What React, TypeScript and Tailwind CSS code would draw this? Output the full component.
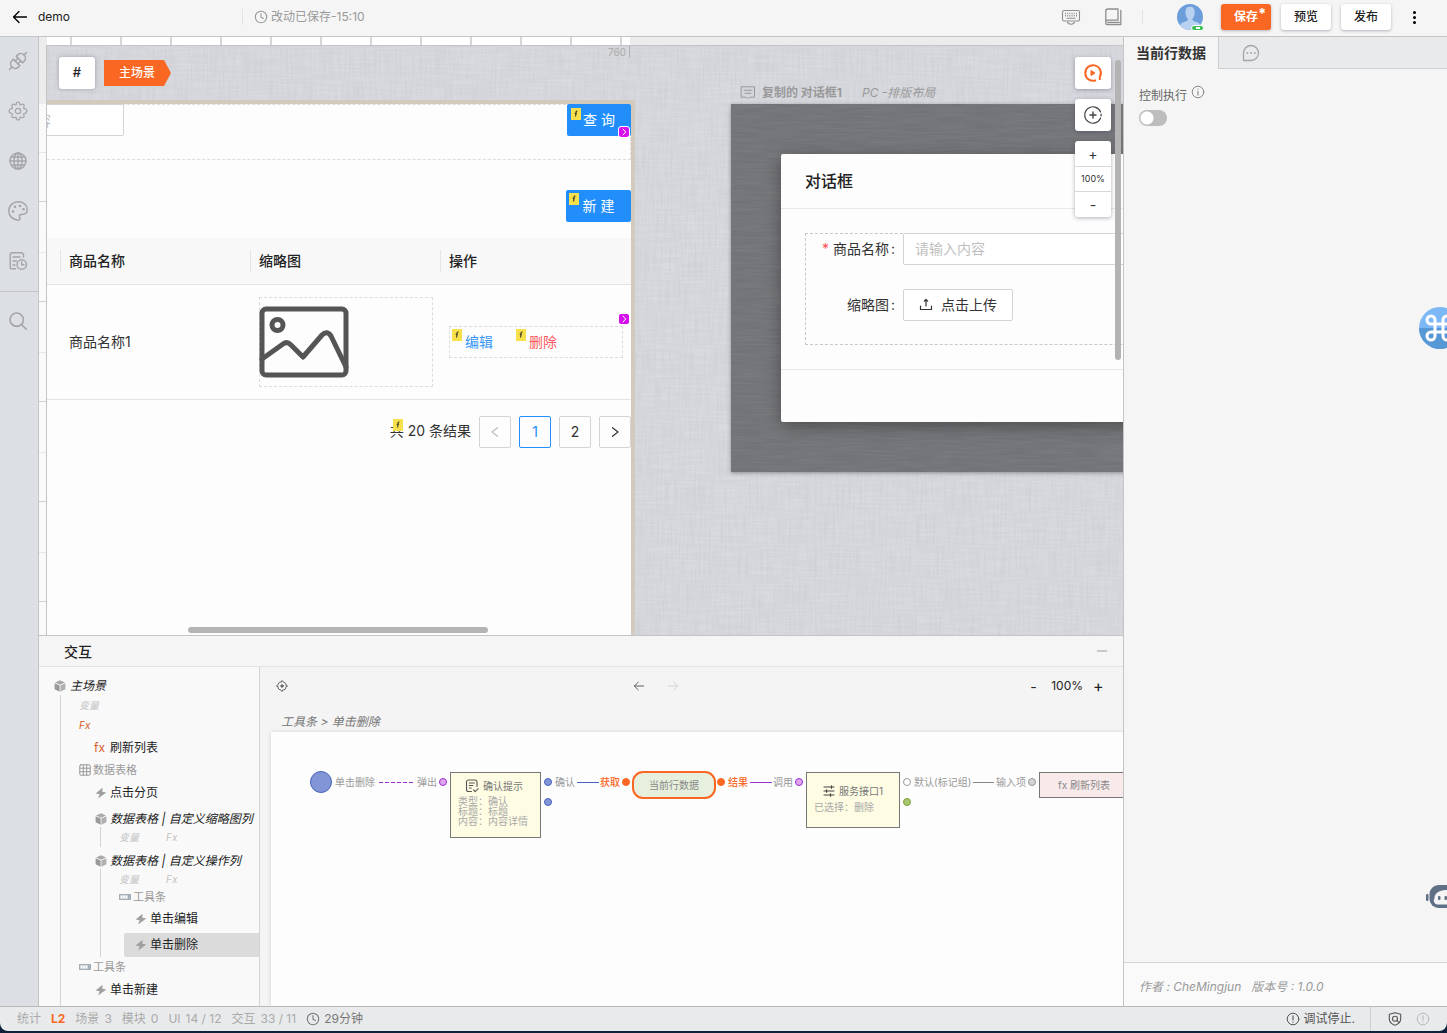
import React from 'react';

type IconProps = { className?: string };

const stroke = {
  fill: 'none',
  stroke: 'currentColor',
  strokeLinecap: 'round' as const,
  strokeLinejoin: 'round' as const,
};

const ArrowLeft = ({ className }: IconProps) => (
  <svg viewBox="0 0 16 14" className={className} {...stroke} strokeWidth="1.3">
    <path d="M7 1.5 1.5 7 7 12.5M1.5 7h13" />
  </svg>
);

const Clock = ({ className }: IconProps) => (
  <svg viewBox="0 0 14 14" className={className} {...stroke} strokeWidth="1.1">
    <circle cx="7" cy="7" r="5.7" />
    <path d="M7 3.6V7.3l2.4 1.2" />
  </svg>
);

const Plug = ({ className }: IconProps) => (
  <svg viewBox="0 0 20 20" className={className} {...stroke} strokeWidth="1.5">
    <g transform="rotate(-45 10 10)">
      <path d="M-2 10h3.500M18.500 10H22" />
      <path d="M8 5.500H5.500a4 4.500 0 0 0 0 9H8z" />
      <path d="M12 5.500h2.500a4 4.500 0 0 1 0 9H12z" />
      <path d="M8 8h4M8 12h4" />
    </g>
  </svg>
);

const Gear = ({ className }: IconProps) => (
  <svg viewBox="0 0 20 20" className={className} {...stroke} strokeWidth="1.2">
    <path d="M8.300 3.200a1.750 1.750 0 1 1 3.400 0q.2 1 1.200.5 1.200-.9 2.900-.1.800 1.700-.1 2.900-.5 1 .5 1.200a1.750 1.750 0 1 1 .6 4.600q-1.600.1-1.100 1.200.9 1.200.1 2.800-1.700.8-2.900-.1-1-.5-1.200.6a1.750 1.750 0 1 1-3.400 0q-.2-1.100-1.200-.6-1.200.9-2.900.1-.8-1.600.1-2.800.5-1.100-1.100-1.200a1.750 1.750 0 1 1 .6-4.600q1-.2.500-1.200-.9-1.200-.1-2.900 1.700-.8 2.900.1 1 .5 1.200-.5Z" />
    <circle cx="10" cy="10" r="2.700" />
  </svg>
);

const Globe = ({ className }: IconProps) => (
  <svg viewBox="0 0 20 20" className={className} {...stroke} strokeWidth="1.4">
    <circle cx="10" cy="10" r="8" />
    <ellipse cx="10" cy="10" rx="4" ry="8" />
    <path d="M10 2v16M2 10h16M3.500 6h13M3.500 14h13" />
  </svg>
);

const Palette = ({ className }: IconProps) => (
  <svg viewBox="0 0 20 20" className={className} {...stroke} strokeWidth="1.5">
    <path d="M10.500 19.200C4.500 19 .8 15 .8 10 .8 4.500 5 .8 10.200.8c5.200 0 9 3.300 9 7.700 0 2.900-1.700 4.700-4.200 4.700-2.600 0-4.200.6-3.500 2.500.8 1.900.6 3.500-1 3.500Z" />
    <g fill="currentColor" stroke="none">
      <circle cx="5" cy="10.500" r="1.300" />
      <circle cx="7" cy="5.700" r="1.300" />
      <circle cx="12" cy="5" r="1.300" />
      <circle cx="15.500" cy="8.300" r="1.300" />
    </g>
  </svg>
);

const LogDoc = ({ className }: IconProps) => (
  <svg viewBox="0 0 20 20" className={className} {...stroke} strokeWidth="1.4">
    <path d="M15.500 6V3.200L14 1.700H4.500C3 1.700 2.200 2.300 2.200 3.700V16c0 1.200.7 1.800 1.800 1.800h3.500M5 6h7M5 10h3.500M5 14h2" />
    <circle cx="13.700" cy="13.500" r="4.700" />
    <path d="M13.700 11v2.800h2.300" />
  </svg>
);

const Search = ({ className }: IconProps) => (
  <svg viewBox="0 0 20 20" className={className} {...stroke} strokeWidth="1.6">
    <circle cx="8.700" cy="8.700" r="6.700" />
    <path d="m13.700 13.700 4.600 4.600" />
  </svg>
);

const Keyboard = ({ className }: IconProps) => (
  <svg viewBox="0 0 20 18" className={className} {...stroke} strokeWidth="1.100">
    <rect x="1.500" y="2.500" width="17" height="10.500" rx="1.500" />
    <path d="M4 5.500h12M4 7.700h12" strokeDasharray="1 1.200" strokeLinecap="butt" strokeWidth="1.400" />
    <path d="M6 10.300h8M6.500 14.500q3.500 3.500 7 0" />
  </svg>
);

const Book = ({ className }: IconProps) => (
  <svg viewBox="0 0 18 18" className={className} {...stroke} strokeWidth="1.300">
    <path d="M14 1H4a2.200 2.200 0 0 0-2.200 2.200v11.500M14 1v11.200H3.800c-2.700 0-2.700 4.500 0 4.500h13V2.500M3.800 14.500h11.500" />
  </svg>
);

const Comment = ({ className }: IconProps) => (
  <svg viewBox="0 0 16 14" className={className} {...stroke} strokeWidth="1">
    <path d="M1.500.8h13v10.400H9.500L8 12.700l-1.500-1.500h-5ZM4 4.300h8M5 7.300h6" />
  </svg>
);

const Chat = ({ className }: IconProps) => (
  <svg viewBox="0 0 18 18" className={className} {...stroke} strokeWidth="1.300">
    <path d="M1.500 16.500V9A7.500 7.500 0 1 1 9 16.500Z" />
    <path d="M5.300 9h.1M9 9h.1M12.700 9h.1" strokeWidth="1.800" />
  </svg>
);

const Info = ({ className, flip = false }: IconProps & { flip?: boolean }) => (
  <svg viewBox="0 0 14 14" className={className} {...stroke} strokeWidth="1">
    <circle cx="7" cy="7" r="5.800" />
    <path d={flip ? 'M7 3.800V8M7 10v.2' : 'M7 6.300v3.800M7 4v.2'} strokeWidth="1.100" />
  </svg>
);

const ShieldSearch = ({ className }: IconProps) => (
  <svg viewBox="0 0 16 16" className={className} {...stroke} strokeWidth="1.100">
    <path d="M8 1.700 13.700 3.200v4.600c0 3.200-2.300 5.300-5.700 6.500-3.400-1.200-5.700-3.300-5.700-6.500V3.200Z" />
    <circle cx="8" cy="7.700" r="2.500" />
    <path d="m9.900 9.600 1.600 1.600" />
  </svg>
);

const Cube = ({ className }: IconProps) => (
  <svg viewBox="0 0 12 12" className={className}>
    <path d="M6 .3 11 2.500 6 4.800 1 2.500Z" fill="#a9a9a9" />
    <path d="M.6 3.300 5.600 5.600V11.800L.6 9.300Z" fill="#999" />
    <path d="M11.400 3.300 6.400 5.600V11.800L11.400 9.300Z" fill="#b0b0b0" />
  </svg>
);

const Bolt = ({ className }: IconProps) => (
  <svg viewBox="0 0 12 12" className={className} fill="#a0a0a0">
    <path d="M7.500.7.700 6.600l3.900.7-1.500 4.200 8.200-6-3.900-.8Z" />
  </svg>
);

const ToolbarIcon = ({ className }: IconProps) => (
  <svg viewBox="0 0 12 6" className={className}>
    <rect x=".7" y=".7" width="10.600" height="4.600" fill="#fff" stroke="#a5b0b8" strokeWidth="1.400" />
    <path d="M3.700 1v4M6.200 1v4" stroke="#c3cbd0" strokeWidth=".8" />
    <path d="M8.500 1h2.500v4H8.500z" fill="#a5b0b8" />
  </svg>
);

const GridIcon = ({ className }: IconProps) => (
  <svg viewBox="0 0 12 12" className={className} {...stroke} strokeWidth="1">
    <rect x=".8" y=".8" width="10.400" height="10.400" rx="1" />
    <path d="M1 4.200h10M1 7.700h10M4.300 1v10M7.700 1v10" />
  </svg>
);

const Target = ({ className }: IconProps) => (
  <svg viewBox="0 0 12 12" className={className} {...stroke} strokeWidth="1">
    <circle cx="6" cy="6" r="4.500" strokeDasharray="5.600 1.470" strokeDashoffset="-.7" />
    <path d="M6 .5v1.300M6 10.200v1.300M.5 6h1.300M10.200 6h1.300" />
    <circle cx="6" cy="6" r="1.200" fill="currentColor" />
  </svg>
);

const Upload = ({ className }: IconProps) => (
  <svg viewBox="0 0 14 14" className={className} {...stroke} strokeWidth="1.200">
    <path d="M1.500 9v3.500h11V9M7 9V2.500M5.300 4.200 7 2.500l1.700 1.700" />
  </svg>
);

const Picture = ({ className }: IconProps) => (
  <svg viewBox="0 0 90 72" className={className} {...stroke} stroke="#555" strokeWidth="5">
    <rect x="3" y="3" width="84" height="66" rx="4" />
    <circle cx="18.500" cy="19" r="5.500" />
    <path d="M3 53 24 38q4-3 8 1l12 12L63 29q5-5 9 1l15 31" />
  </svg>
);

const FBadge = ({ className }: IconProps) => (
  <svg viewBox="0 0 10 12" className={`absolute h-3 w-[10px] ${className}`} {...stroke} stroke="#4a4526" strokeWidth="1.200">
    <path d="M0 0h10v12H0z" fill="#f6e04c" stroke="none" />
    <path d="M6.500 3.300q-1.300-.4-1.500 1L4.600 8.500M3.700 5.300h2.200" strokeLinecap="butt" />
  </svg>
);

const Marker = ({ className }: IconProps) => (
  <span className={`absolute flex size-[10px] items-center justify-center rounded-[2px] bg-[#d70fee] ${className}`}>
    <svg viewBox="0 0 8 8" className="size-2" {...stroke} stroke="#fff" strokeWidth="1">
      <path d="M3 1 5.700 4 3 7" />
    </svg>
  </span>
);

/* Woven cloth texture laid over the free canvas and the dialog backdrop. */
const Linen = ({ id, className }: { id: string; className: string }) => (
  <svg aria-hidden="true" className={`pointer-events-none absolute inset-0 size-full ${className}`}>
    <filter id={`${id}-h`} x="0" y="0" width="100%" height="100%">
      <feTurbulence type="fractalNoise" baseFrequency="0.03 0.5" numOctaves="2" seed="3" />
      <feColorMatrix values="0 0 0 0 1  0 0 0 0 1  0 0 0 0 1  1.2 0 0 0 -0.4" />
    </filter>
    <filter id={`${id}-v`} x="0" y="0" width="100%" height="100%">
      <feTurbulence type="fractalNoise" baseFrequency="0.5 0.03" numOctaves="2" seed="8" />
      <feColorMatrix values="0 0 0 0 0.3  0 0 0 0 0.32  0 0 0 0 0.38  0.8 0 0 0 -0.3" />
    </filter>
    <rect width="100%" height="100%" filter={`url(#${id}-h)`} />
    <rect width="100%" height="100%" filter={`url(#${id}-v)`} />
  </svg>
);

function Header() {
  return (
    <header className="flex h-[37px] shrink-0 items-center border-b border-[#c4c4c4] bg-[#f5f5f5] pb-[2px]">
      <div className="flex w-[242px] items-center">
        <button aria-label="返回" className="ml-3">
          <ArrowLeft className="h-[14px] w-4" />
        </button>
        <span className="ml-[10px] text-[12px] text-[#222]">demo</span>
      </div>
      <div className="flex flex-1 items-center border-l border-[#e3e3e3] pl-[11px] text-[12px] leading-4 text-[#999]">
        <Clock className="mr-[3px] size-[14px]" />
        改动已保存-15:10
      </div>
      <div className="flex items-center text-[#8e8e8e]">
        <button aria-label="快捷键">
          <Keyboard className="h-[18px] w-5" />
        </button>
        <button aria-label="文档" className="ml-[23px]">
          <Book className="size-[18px]" />
        </button>
        <span className="ml-5 h-[14px] w-px bg-[#e3e3e3]" />
        <span className="relative ml-[34px]">
          <svg viewBox="0 0 26 26" className="size-[26px]">
            <defs>
              <clipPath id="avatar">
                <circle cx="13" cy="13" r="13" />
              </clipPath>
            </defs>
            <g clipPath="url(#avatar)">
              <path d="M0 0h26v26H0z" fill="#6c9edb" />
              <path d="M8.500 8.500C8.500 4 10 2.800 13 2.800s4.700 1.700 4.700 5.700c0 3-1 5-2.400 6.300 0 2 1 2.400 4 3.200 2.700.7 4 2 4 4V26H3v-4c0-2 1.300-3.300 4-4 3-.8 4-1.200 4-3.200C9.500 13.500 8.500 11.500 8.500 8.500Z" fill="#b9d1f0" />
            </g>
          </svg>
          <span className="absolute -right-px -bottom-px flex h-[6px] w-[13px] items-center justify-center rounded-full border border-white bg-[#3dbd55]">
            <span className="h-[2px] w-1 bg-white" />
          </span>
        </span>
        <button className="relative ml-[18px] h-[26px] w-[50px] rounded-[3px] bg-[#fa6723] text-[12px] font-bold text-white shadow-[0_1px_3px_rgba(60,60,90,0.35)]">
          保存
          <span className="absolute top-[2px] right-[5px] text-[14px] leading-4">*</span>
        </button>
        <button className="ml-[10px] h-[26px] w-[50px] rounded-[3px] bg-white text-[12px] font-medium text-[#222] shadow-[0_1px_3px_rgba(60,60,90,0.35)]">
          预览
        </button>
        <button className="ml-[10px] h-[26px] w-[50px] rounded-[3px] bg-white text-[12px] font-medium text-[#222] shadow-[0_1px_3px_rgba(60,60,90,0.35)]">
          发布
        </button>
        <button aria-label="更多" className="mr-[31px] ml-[21px] flex w-1 flex-col items-center gap-[2px]">
          <span className="size-[3px] rounded-full bg-black" />
          <span className="size-[3px] rounded-full bg-black" />
          <span className="size-[3px] rounded-full bg-black" />
        </button>
      </div>
    </header>
  );
}

function SideNav() {
  const items = [
    ['连接器', Plug],
    ['设置', Gear],
    ['国际化', Globe],
    ['主题', Palette],
    ['日志', LogDoc],
  ] as const;
  return (
    <nav className="w-[39px] shrink-0 border-r border-[#c4c4c4] bg-[#dcdfe4] text-[#a3a5a9]">
      {items.map(([label, Icon]) => (
        <button key={label} aria-label={label} className="flex h-[50px] w-full items-center justify-center pr-[2px] pb-[2px]">
          <Icon className="size-5" />
        </button>
      ))}
      <button aria-label="搜索" className="mt-1 flex h-[58px] w-full items-center justify-center border-t border-[#c4c4c4] pr-[2px]">
        <Search className="size-5" />
      </button>
    </nav>
  );
}

function PageScene() {
  const th = 'p-0 pl-2 text-left font-medium';
  return (
    <section className="relative mt-[54px] w-[588px] shrink-0 overflow-hidden border-t-4 border-r-4 border-[#d3c9bc] bg-[#fdfdfd] text-[14px] text-[#333]">
      <div className="flex h-14 items-start justify-between border-y border-r border-dashed border-[#dcdcdc]">
        <input
          aria-label="查询内容"
          placeholder="请输入内容"
          className="-mt-px -ml-[79px] h-8 w-[156px] rounded-[2px] border border-[#d4d4d4] bg-white px-3 placeholder:text-[#bfbfbf]"
        />
        <button className="relative -mt-px -mr-px h-8 w-16 rounded-[2px] bg-[#228efc] pb-[2px] text-white">
          查 询
          <FBadge className="top-1 left-1" />
          <Marker className="right-[2px] -bottom-px outline outline-white" />
        </button>
      </div>
      <div className="mt-[30px] mb-4 flex justify-end">
        <button className="relative h-8 w-[65px] rounded-[2px] bg-[#228efc] pb-[2px] text-white">
          新 建
          <FBadge className="top-[3px] left-[3px]" />
        </button>
      </div>
      <table className="w-full table-fixed border-collapse">
        <thead>
          <tr className="h-[46px] border-b border-[#e4e4e4] bg-[#f8f8f8] text-[#222]">
            <th className="w-[14px] p-0">
              <span className="ml-auto block h-[22px] w-px bg-[#e4e4e4]" />
            </th>
            <th className={th}>
              <span className="flex h-[22px] items-center border-r border-[#e4e4e4]">商品名称</span>
            </th>
            <th className={th}>
              <span className="flex h-[22px] items-center border-r border-[#e4e4e4]">缩略图</span>
            </th>
            <th className={th}>操作</th>
          </tr>
        </thead>
        <tbody>
          <tr className="h-[115px] border-b border-[#e4e4e4]">
            <td className="p-0" />
            <td className="p-0 pl-2">商品名称1</td>
            <td className="p-0 px-2">
              <div className="flex h-[90px] items-center border border-dashed border-[#dcdcdc]">
                <Picture className="-ml-px h-[72px] w-[90px]" />
              </div>
            </td>
            <td className="relative p-0 px-2">
              <div className="flex h-8 items-center gap-9 border border-dashed border-[#dcdcdc] pl-[15px]">
                <button className="relative text-[#3797f5]">
                  编辑
                  <FBadge className="-top-[2px] -left-[13px]" />
                </button>
                <button className="relative text-[#fb5a5e]">
                  删除
                  <FBadge className="-top-[2px] -left-[13px]" />
                </button>
              </div>
              <Marker className="top-[29px] right-[2px]" />
            </td>
          </tr>
        </tbody>
      </table>
      <div className="mt-4 flex items-center justify-end gap-2">
        <span className="relative pb-[2px]">
          共 20 条结果
          <FBadge className="-top-px left-[3px]" />
        </span>
        <button aria-label="上一页" className="flex size-8 items-center justify-center rounded-[2px] border border-[#d4d4d4] text-[#bbb]">
          <svg viewBox="0 0 12 12" className="size-3" {...stroke} strokeWidth="1.100">
            <path d="M8.500 1.700 3 6l5.500 4.300" />
          </svg>
        </button>
        <button className="size-8 rounded-[2px] border border-[#228efc] text-[#228efc]">1</button>
        <button className="size-8 rounded-[2px] border border-[#d4d4d4]">2</button>
        <button aria-label="下一页" className="flex size-8 items-center justify-center rounded-[2px] border border-[#d4d4d4]">
          <svg viewBox="0 0 12 12" className="size-3" {...stroke} strokeWidth="1.200">
            <path d="M3.500 1.700 9 6l-5.500 4.300" />
          </svg>
        </button>
      </div>
    </section>
  );
}

function DialogScene() {
  return (
    <section className="relative mt-[36px] ml-24 w-[620px] shrink-0">
      <div className="flex h-[22px] items-center pl-[9px] text-[12px] text-[#999]">
        <Comment className="mr-[6px] h-[14px] w-4" />
        <h3 className="font-bold">复制的 对话框1</h3>
        <em className="ml-5">PC -排版布局</em>
      </div>
      <div className="relative h-[368px] bg-[#727376] p-[50px] shadow-[0_1px_4px_rgba(0,0,0,0.35)]">
        <Linen id="backdrop" className="opacity-10" />
        <div className="relative rounded-[2px] bg-[#fdfdfd] text-[14px] text-[#333] shadow-[0_4px_16px_rgba(0,0,0,0.35)]">
          <h2 className="h-[55px] border-b border-[#e8e8e8] pl-6 text-[16px] leading-[54px] font-medium text-[#222]">对话框</h2>
          <div className="p-6">
            <div className="flex flex-col gap-6 border border-dashed border-[#c8c8c8] pb-[23px]">
              <div className="-mt-px flex h-8 items-center">
                <label htmlFor="goods-name" className="flex w-[97px] shrink-0 justify-end gap-[2px] pr-2 pb-[2px]">
                  <span className="mr-[2px] text-[#ff4d4f]">*</span>
                  <span>商品名称</span>
                  <span>:</span>
                </label>
                <input
                  id="goods-name"
                  placeholder="请输入内容"
                  className="h-8 min-w-0 flex-1 rounded-[2px] border border-[#d4d4d4] bg-white px-[11px] pb-[2px] placeholder:text-[#bfbfbf]"
                />
              </div>
              <div className="flex h-8 items-center">
                <span className="flex w-[97px] shrink-0 justify-end gap-[2px] pr-2 pb-[2px]">
                  <span>缩略图</span>
                  <span>:</span>
                </span>
                <button className="flex h-8 w-[110px] items-center justify-center gap-2 rounded-[2px] border border-[#d4d4d4] bg-white pb-[2px]">
                  <Upload className="size-[14px]" />
                  点击上传
                </button>
              </div>
            </div>
          </div>
          <div className="h-[53px] border-t border-[#e8e8e8]" />
        </div>
      </div>
    </section>
  );
}

function Canvas() {
  const float = 'w-9 rounded-[3px] bg-white shadow-[0_1px_4px_rgba(60,60,90,0.4)]';
  return (
    <main className="flex min-h-0 flex-1 flex-col bg-[#ececec]">
      <div className="ml-2 h-2 w-[583px] shrink-0 bg-white [background-image:linear-gradient(90deg,#d6d6d6_2px,transparent_2px)] [background-size:50px_100%] [background-position:23px_0]" />
      <div className="flex min-h-0 flex-1">
        <div className="w-[7px] shrink-0 pt-[59px]">
          <div className="h-full bg-[#fafafa] [background-image:linear-gradient(#d0d0d0_1px,transparent_1px),linear-gradient(#e6e6e6_1px,transparent_1px)] [background-size:100%_100px] [background-position:0_97px,0_48px]" />
        </div>
        <div className="relative flex min-w-0 flex-1 overflow-hidden border-t border-l border-[#c4c4c4] bg-[#d4d6db]">
          <Linen id="cloth" className="opacity-25" />
          <PageScene />
          <DialogScene />
          <span className="absolute top-0 left-[561px] h-3 w-[22px] border-r border-[#b0b0b0] text-[10px] leading-[13px] text-[#aaa]">760</span>
          <div className="absolute top-[11px] left-3 flex items-center gap-[9px]">
            <button className="h-8 w-9 rounded-[3px] bg-white text-[13px] font-medium text-[#222] shadow-[0_0_4px_rgba(60,60,90,0.35)]">#</button>
            <button className="h-[26px] w-[67px] bg-[#fa6723] pr-px text-[12px] font-medium text-white [clip-path:polygon(0_0,60px_0,100%_50%,60px_100%,0_100%)]">
              主场景
            </button>
          </div>
          <div className="absolute top-[11px] right-3 flex flex-col gap-[10px]">
            <button aria-label="运行" className={`flex h-8 items-center justify-center text-[#fa6723] ${float}`}>
              <svg viewBox="0 0 20 20" className="size-5" {...stroke} strokeLinecap="butt" strokeWidth="2">
                <path d="M13 17.200A7.800 7.800 0 1 1 16.800 13.900M16.800 13v4" />
                <path d="M8 7.500v5l4-2.500Z" fill="currentColor" strokeWidth="1" />
              </svg>
            </button>
            <button aria-label="添加" className={`flex h-8 items-center justify-center text-[#444] ${float}`}>
              <svg viewBox="0 0 20 20" className="size-5" {...stroke} strokeWidth="1.200">
                <path d="M17.600 7A8.200 8.200 0 1 0 17.600 13M18.100 9v2" />
                <path d="M10 7v6M7 10h6" strokeWidth="1.400" />
              </svg>
            </button>
            <div className={`flex flex-col divide-y divide-[#d8d8d8] text-center text-[#333] ${float}`}>
              <button className="h-[26px] text-[14px] leading-[26px]">+</button>
              <span className="h-[25px] text-[9px] leading-6">100%</span>
              <button className="h-[25px] text-[14px] leading-[26px]">-</button>
            </div>
          </div>
          <span className="absolute top-[14px] right-[2px] h-[300px] w-[6px] rounded-full bg-[#b3b3b3]" />
          <span className="absolute bottom-[2px] left-[141px] h-[6px] w-[300px] rounded-full bg-[#b4b4b4]" />
        </div>
      </div>
    </main>
  );
}

function EventRow({ label, className }: { label: string; className: string }) {
  return (
    <button className={`flex items-center gap-[3px] text-[#222] ${className}`}>
      <Bolt className="size-3" />
      {label}
    </button>
  );
}

function SceneVars() {
  return (
    <div className="flex h-[14px] items-center gap-[27px] pb-px pl-[18px] text-[10px] text-[#c4c4c4] italic">
      <span>变量</span>
      <span>Fx</span>
    </div>
  );
}

function Tree() {
  return (
    <aside className="w-[221px] shrink-0 overflow-hidden border-r border-[#d4d4d4] bg-[#f9f9f9] pt-[10px] text-[12px] whitespace-nowrap text-[#222]">
      <div className="flex h-[18px] items-center gap-1 pl-[15px] italic">
        <Cube className="size-3" />
        主场景
      </div>
      <div className="ml-[21px] border-l border-[#d4d4d4]">
        <div className="flex h-5 items-center pl-[18px] text-[10px] text-[#c4c4c4] italic">变量</div>
        <div className="flex h-5 items-center pl-[18px] text-[10px] text-[#d85c2c] italic">Fx</div>
        <div className="flex h-[26px] items-center gap-[5px] pl-[33px]">
          <span className="text-[#d85c2c]">fx</span>刷新列表
        </div>
        <div className="flex h-[18px] items-center gap-[2px] pl-[18px] text-[11px] text-[#999]">
          <GridIcon className="size-3" />
          数据表格
        </div>
        <EventRow label="点击分页" className="h-7 pl-[34px]" />
        <div className="flex h-6 items-center gap-[3px] pl-[34px] italic">
          <Cube className="size-3" />
          数据表格 | 自定义缩略图列
        </div>
        <div className="-mt-1 ml-[39px] border-l border-[#d4d4d4] pt-1 pb-[2px]">
          <SceneVars />
        </div>
        <div className="mt-[2px] flex h-6 items-center gap-[3px] pl-[34px] italic">
          <Cube className="size-3" />
          数据表格 | 自定义操作列
        </div>
        <div className="-mt-1 ml-[39px] border-l border-[#d4d4d4] pt-1">
          <SceneVars />
          <div className="flex h-5 items-center gap-[2px] pl-[18px] text-[11px] text-[#999]">
            <ToolbarIcon className="h-[6px] w-3" />
            工具条
          </div>
          <EventRow label="单击编辑" className="h-6 pl-[34px]" />
          <div className="mt-[2px] pl-[23px]">
            <EventRow label="单击删除" className="h-6 w-full rounded-l-[2px] bg-[#dbdbdb] pl-[11px]" />
          </div>
        </div>
        <div className="flex h-5 items-center gap-[2px] pl-[18px] text-[11px] text-[#999]">
          <ToolbarIcon className="h-[6px] w-3" />
          工具条
        </div>
        <EventRow label="单击新建" className="h-[29px] pb-[3px] pl-[34px]" />
      </div>
    </aside>
  );
}

function Diagram() {
  const lab = 'absolute leading-4 text-[#999]';
  const dot = 'absolute size-2 rounded-full border';
  return (
    <div className="relative ml-[11px] min-h-0 flex-1 overflow-hidden bg-[#fdfdfd] text-[10px] whitespace-nowrap shadow-[0_0_4px_rgba(0,0,0,0.15)]">
      <span className="absolute top-[39px] left-[39px] size-[22px] rounded-full border border-[#4a62bd] bg-[#8295d6]" />
      <span className={`top-[42px] left-[64px] ${lab}`}>单击删除</span>
      <svg viewBox="0 0 36 2" className="absolute top-[50px] left-[108px] h-[2px] w-9">
        <path d="M0 .5h34" stroke="#9a2fd0" strokeDasharray="4 2" />
      </svg>
      <span className={`top-[42px] left-[146px] ${lab}`}>弹出</span>
      <span className={`top-[46px] left-[168px] border-[#9a2fd0] bg-[#dfa6f0] ${dot}`} />

      <div className="absolute top-10 left-[179px] h-[66px] w-[91px] border border-[#777] bg-[#fefce3] px-[7px] pt-[5px] leading-[10px] text-[#aaa]">
        <div className="mb-[2px] flex items-center justify-center gap-1 pr-[3px] leading-4 text-[#777]">
          <svg viewBox="0 0 14 14" className="size-[14px]" {...stroke} stroke="#555" strokeWidth="1.100">
            <path d="M12 7.500V3a2 2 0 0 0-2-2H3.500a2 2 0 0 0-2 2v7.500a2 2 0 0 0 2 2h3M4.300 4h5M4.300 6.500h3.500M4.300 9h2M8.500 11l1.700 1.700 3-3" />
          </svg>
          确认提示
        </div>
        <p>类型：确认</p>
        <p>标题：标题</p>
        <p>内容：内容详情</p>
      </div>

      <span className={`top-[46px] left-[273px] border-[#4a62bd] bg-[#8295d6] ${dot}`} />
      <span className={`top-[66px] left-[273px] border-[#4a62bd] bg-[#8295d6] ${dot}`} />
      <span className={`top-[42px] left-[284px] ${lab}`}>确认</span>
      <span className="absolute top-[50px] left-[306px] w-[22px] border-t border-[#4a62bd]" />
      <span className="absolute top-[42px] left-[329px] leading-4 font-medium text-[#fa6723]">获取</span>
      <span className={`top-[46px] left-[351px] border-[#fa6723] bg-[#fa6723] ${dot}`} />
      <div className="absolute top-[39px] left-[361px] flex h-7 w-[84px] items-center justify-center rounded-[11px] border-2 border-[#fa6723] bg-[#e6f0dc] text-[#888]">
        当前行数据
      </div>
      <span className={`top-[46px] left-[446px] border-[#fa6723] bg-[#fa6723] ${dot}`} />
      <span className="absolute top-[42px] left-[457px] leading-4 font-medium text-[#fa6723]">结果</span>
      <span className="absolute top-[50px] left-[479px] w-[22px] border-t border-[#9a2fd0]" />
      <span className={`top-[42px] left-[502px] ${lab}`}>调用</span>
      <span className={`top-[46px] left-[524px] border-[#9a2fd0] bg-[#dfa6f0] ${dot}`} />

      <div className="absolute top-10 left-[535px] h-14 w-[94px] border border-[#777] bg-[#fefce3] px-[7px] pt-[10px] leading-3 text-[#aaa]">
        <div className="mb-[2px] flex items-center justify-center gap-1 leading-4 text-[#777]">
          <svg viewBox="0 0 12 12" className="size-3" {...stroke} stroke="#444" strokeWidth="1.200">
            <path d="M1 2h10M1 6h10M1 10h10M8.500.8v2.400M3.500 4.800v2.400M7.500 8.800v2.400" />
          </svg>
          服务接口1
        </div>
        <p>已选择：删除</p>
      </div>

      <span className={`top-[46px] left-[632px] border-[#999] bg-white ${dot}`} />
      <span className={`top-[66px] left-[632px] border-[#7c9f38] bg-[#a9c670] ${dot}`} />
      <span className={`top-[42px] left-[643px] ${lab}`}>默认(标记组)</span>
      <span className="absolute top-[50px] left-[702px] w-[21px] border-t border-[#888]" />
      <span className={`top-[42px] left-[725px] ${lab}`}>输入项</span>
      <span className={`top-[46px] left-[757px] border-[#999] bg-[#d4d4d4] ${dot}`} />
      <div className="absolute top-10 left-[768px] flex h-[26px] w-[90px] items-center justify-center border border-[#777] bg-[#f8eaea] text-[#888]">
        fx 刷新列表
      </div>
    </div>
  );
}

function InteractionPanel() {
  return (
    <section className="flex h-[371px] shrink-0 flex-col border-t border-[#c4c4c4] bg-[#f4f4f4]">
      <div className="flex h-[31px] shrink-0 items-center justify-between border-b border-[#e4e4e4] bg-[#f5f5f5] pr-4 pl-[25px]">
        <h2 className="text-[14px] font-medium text-[#222]">交互</h2>
        <button aria-label="收起" className="h-[2px] w-[10px] bg-[#c8c8c8]" />
      </div>
      <div className="flex min-h-0 flex-1">
        <Tree />
        <div className="flex min-w-0 flex-1 flex-col overflow-hidden">
          <div className="flex h-[38px] shrink-0 items-center pr-5 pl-4 text-[12px] text-[#222]">
            <button aria-label="定位" className="text-[#666]">
              <Target className="size-3" />
            </button>
            <div className="flex flex-1 justify-center gap-[22px] pr-[6px]">
              <button aria-label="后退" className="text-[#555]">
                <ArrowLeft className="h-[10px] w-3" />
              </button>
              <button aria-label="前进" className="text-[#d0d0d0]">
                <ArrowLeft className="h-[10px] w-3 rotate-180" />
              </button>
            </div>
            <div className="flex items-center gap-[10px]">
              <button className="w-[11px] text-left text-[14px]">-</button>
              <span>100%</span>
              <button className="w-[10px] text-[16px]">+</button>
            </div>
          </div>
          <div className="h-[27px] shrink-0 pl-[21px] text-[12px] leading-[34px] text-[#777] italic">
            工具条 &gt; 单击删除
          </div>
          <Diagram />
        </div>
      </div>
    </section>
  );
}

function Inspector() {
  return (
    <aside className="flex w-[324px] shrink-0 flex-col border-l border-[#c4c4c4] bg-[#f5f5f5]">
      <div className="flex h-8 shrink-0">
        <button className="w-[94px] pb-px text-[14px] font-bold text-[#333]">当前行数据</button>
        <div className="flex flex-1 items-center border-b border-l border-[#cfd0d2] bg-[#e8eaec] pl-[23px] text-[#a5a5a5]">
          <button aria-label="评论">
            <Chat className="size-[18px]" />
          </button>
        </div>
      </div>
      <div className="flex flex-1 flex-col items-start pt-[18px] pl-[15px]">
        <label htmlFor="control-run" className="flex items-start text-[12px] leading-[18px] text-[#666]">
          控制执行
          <Info className="-mt-[2px] ml-1 size-[14px] text-[#888]" />
        </label>
        <input
          id="control-run"
          type="checkbox"
          role="switch"
          className="mt-[5px] h-4 w-7 appearance-none rounded-full bg-[#bdbdbd] bg-[radial-gradient(circle_at_8px_8px,#fff_6px,transparent_7px)]"
        />
      </div>
      <footer className="flex h-11 shrink-0 items-center gap-[10px] border-t border-[#d4d4d4] bg-[#fafafa] pt-1 pl-[15px] text-[12px] text-[#999] italic">
        <span>作者 : CheMingjun</span>
        <span>版本号 : 1.0.0</span>
      </footer>
    </aside>
  );
}

function Stat({ name, value }: { name: string; value: string }) {
  return (
    <span className="flex gap-[5px]">
      <span>{name}</span>
      <span>{value}</span>
    </span>
  );
}

function StatusBar() {
  return (
    <footer className="flex h-[25px] shrink-0 items-center gap-[10px] border-t border-[#b8b8b8] bg-[#e9eaec] pl-[17px] text-[12px] text-[#aaa]">
      <span>统计</span>
      <b className="text-[#fa6723]">L2</b>
      <Stat name="场景" value="3" />
      <Stat name="模块" value="0" />
      <Stat name="UI" value="14 / 12" />
      <Stat name="交互" value="33 / 11" />
      <span className="flex items-center gap-1 text-[#777]">
        <Clock className="size-[14px]" />
        29分钟
      </span>
      <span className="ml-auto flex items-center gap-1 pr-[5px] text-[#555]">
        <Info flip className="size-[14px]" />
        调试停止.
      </span>
      <span className="flex h-full items-center gap-[13px] border-l border-[#d0d0d0] pr-[17px] pl-4">
        <ShieldSearch className="size-4 text-[#555]" />
        <Info flip className="size-[14px] text-[#bbb]" />
      </span>
    </footer>
  );
}

function FloatingHelpers() {
  return (
    <>
      <button aria-label="快捷命令" className="absolute top-[307px] right-0 h-[42px] w-7">
        <svg viewBox="0 0 28 42" className="h-[42px] w-7">
          <circle cx="21" cy="21" r="21" fill="#7cb8f5" />
          <path d="M0 21a21 21 0 0 0 42 0Z" fill="#5698d6" />
          <path
            d="M17 17v-4a4 4 0 1 0-4 4h16a4 4 0 1 0-4-4v16a4 4 0 1 0 4-4H13a4 4 0 1 0 4 4ZM17 17v12"
            transform="translate(-1 0)"
            fill="none"
            stroke="#fff"
            strokeWidth="3"
          />
        </svg>
      </button>
      <button aria-label="助手" className="absolute top-[885px] right-0 h-6 w-[21px]">
        <svg viewBox="0 0 21 24" className="h-6 w-[21px]">
          <rect x="0" y="9" width="2.500" height="7" rx="1" fill="#607086" />
          <rect x="3.500" y="0" width="30" height="23" rx="9" fill="#607086" />
          <path d="M11.500 19.500a4 4 0 0 1-3-6.300C8 9 13 5 20 5h1v14.500Z" fill="#f5f5f5" />
          <rect x="12" y="11" width="2.500" height="4" rx="1" fill="#607086" />
          <rect x="18.500" y="11" width="2.500" height="4" rx="1" fill="#607086" />
        </svg>
      </button>
    </>
  );
}

export default function App() {
  return (
    <div className="h-screen bg-[#0d2239] pb-[2px] font-[Inter,'Noto_Sans_CJK_SC',sans-serif] whitespace-nowrap">
      <div className="relative flex h-full flex-col overflow-hidden rounded-b-[8px]">
        <Header />
        <div className="flex min-h-0 flex-1">
          <SideNav />
          <div className="flex min-w-0 flex-1 flex-col">
            <Canvas />
            <InteractionPanel />
          </div>
          <Inspector />
        </div>
        <StatusBar />
        <FloatingHelpers />
      </div>
    </div>
  );
}
